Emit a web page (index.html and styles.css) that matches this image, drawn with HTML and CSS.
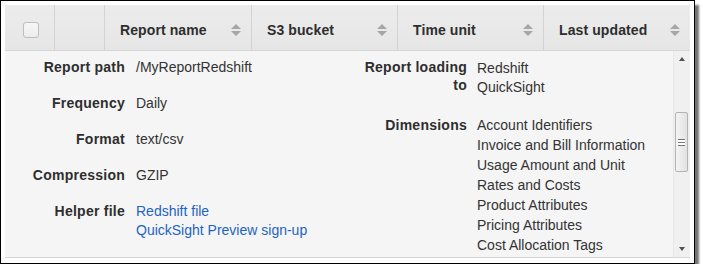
FILE: index.html
```html
<!DOCTYPE html>
<html>
<head>
<meta charset="utf-8">
<link rel="stylesheet" href="styles.css">
</head>
<body>
<div class="frame">
  <div class="panel">
    <div class="thead">
      <div class="th th-check"><span class="checkbox"></span></div>
      <div class="th"></div>
      <div class="th sortable"><span>Report name</span><svg class="sort" viewBox="0 0 10 14" width="10" height="14"><path d="M0 6L5 1L10 6Z M0 8L10 8L5 13Z" fill="#a6a6a6"/></svg></div>
      <div class="th sortable"><span>S3 bucket</span><svg class="sort" viewBox="0 0 10 14" width="10" height="14"><path d="M0 6L5 1L10 6Z M0 8L10 8L5 13Z" fill="#a6a6a6"/></svg></div>
      <div class="th sortable"><span>Time unit</span><svg class="sort" viewBox="0 0 10 14" width="10" height="14"><path d="M0 6L5 1L10 6Z M0 8L10 8L5 13Z" fill="#a6a6a6"/></svg></div>
      <div class="th sortable"><span>Last updated</span><svg class="sort" viewBox="0 0 10 14" width="10" height="14"><path d="M0 6L5 1L10 6Z M0 8L10 8L5 13Z" fill="#a6a6a6"/></svg></div>
    </div>
    <div class="tbody">
      <div class="details">
        <dl class="dl dl-left">
          <dt>Report path</dt><dd>/MyReportRedshift</dd>
          <dt>Frequency</dt><dd>Daily</dd>
          <dt>Format</dt><dd>text/csv</dd>
          <dt>Compression</dt><dd>GZIP</dd>
          <dt>Helper file</dt><dd class="links"><a href="#">Redshift file</a><a href="#">QuickSight Preview sign-up</a></dd>
        </dl>
        <dl class="dl dl-right">
          <dt>Report loading to</dt><dd class="multi"><span>Redshift</span><span>QuickSight</span></dd>
          <dt>Dimensions</dt><dd class="list"><span>Account Identifiers</span><span>Invoice and Bill Information</span><span>Usage Amount and Unit</span><span>Rates and Costs</span><span>Product Attributes</span><span>Pricing Attributes</span><span>Cost Allocation Tags</span></dd>
        </dl>
      </div>
      <div class="scrollbar">
        <svg class="arrow" viewBox="0 0 16 16" width="16" height="16"><path d="M5 10L8 6L11 10Z" fill="#505050"/></svg>
        <div class="track">
          <div class="thumb"><span class="grip"></span></div>
        </div>
        <svg class="arrow" viewBox="0 0 16 16" width="16" height="16"><path d="M5 6L11 6L8 10Z" fill="#505050"/></svg>
      </div>
    </div>
  </div>
</div>
</body>
</html>
```

FILE: styles.css
```css
html, body {
  margin: 0;
  padding: 0;
  background: #ffffff;
}

body {
  font-family: "Liberation Sans", Arial, sans-serif;
  font-size: 14px;
  color: #333333;
}

.frame {
  width: 695px;
  height: 264px;
  box-sizing: border-box;
  border: 1px solid #000000;
  padding: 4px 4px 0 4px;
  background: #ffffff;
  box-shadow: 4px 5px 2px rgba(0, 0, 0, 0.55);
}

.panel {
  width: 685px;
  height: 252px;
  border-bottom: 1px solid #d4d4d4;
  background: #f5f5f5;
  display: flex;
  flex-direction: column;
}

.thead {
  display: grid;
  grid-template-columns: 49px 50px 147px 146px 146px 147px;
  height: 46px;
  box-sizing: border-box;
  border-bottom: 1px solid #d6d6d6;
  background: linear-gradient(#ececec, #e6e6e6);
}

.th {
  display: flex;
  align-items: center;
  box-sizing: border-box;
  border-left: 1px solid #d3d3d3;
  padding-top: 5px;
}

.th-check {
  border-left: none;
  justify-content: center;
  padding-left: 2px;
  padding-top: 4px;
}

.checkbox {
  width: 16px;
  height: 16px;
  box-sizing: border-box;
  border: 1px solid #bdbdbd;
  border-radius: 3px;
  background: linear-gradient(#f7f7f7, #ececec);
}

.sortable {
  justify-content: space-between;
  padding-left: 15px;
  padding-right: 10px;
  font-weight: bold;
  color: #2e2e2e;
  letter-spacing: 0.1px;
}

.sort {
  display: block;
}

.tbody {
  flex: 1;
  display: flex;
  overflow: hidden;
}

.details {
  flex: 1;
  display: flex;
  padding-top: 7px;
}

.dl {
  margin: 0;
  display: grid;
  align-content: start;
  column-gap: 11px;
  row-gap: 18px;
  line-height: 18px;
}

.dl-left {
  width: 347px;
  grid-template-columns: 120px 1fr;
}

.dl-right {
  grid-template-columns: 115px 1fr;
  column-gap: 10px;
  row-gap: 20px;
}

dt {
  font-weight: bold;
  text-align: right;
  color: #2e2e2e;
  letter-spacing: 0.25px;
}

dd {
  margin: 0;
  color: #333333;
}

.links a {
  display: block;
  color: #1c64c4;
  text-decoration: none;
  line-height: 19px;
}

.multi span {
  display: block;
  line-height: 18px;
  padding-top: 1px;
}

.list span {
  display: block;
  line-height: 20px;
}

.list span:first-child {
  margin-top: -1px;
}

.scrollbar {
  width: 16px;
  display: flex;
  flex-direction: column;
  background: #f0f0f0;
  border-left: 1px solid #e8e8e8;
}

.arrow {
  display: block;
  flex: none;
}

.track {
  flex: 1;
  padding-top: 45px;
}

.thumb {
  width: 13px;
  height: 60px;
  margin-left: 1px;
  box-sizing: border-box;
  border: 1px solid #b3b3b3;
  border-radius: 2px;
  background: linear-gradient(90deg, #f4f4f4, #e2e2e2);
  display: flex;
  align-items: center;
  justify-content: center;
}

.grip {
  width: 7px;
  height: 5px;
  border-top: 1px solid #777777;
  border-bottom: 1px solid #777777;
  background: linear-gradient(#ffffff 0 2px, #777777 2px 3px, #ffffff 3px);
}
```
